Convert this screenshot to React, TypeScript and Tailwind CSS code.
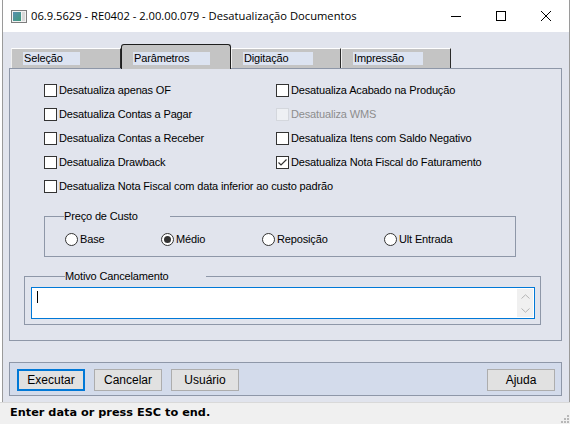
import React from 'react'

const ROWS: { label: string; checked?: boolean; disabled?: boolean }[][] = [
  [{ label: 'Desatualiza apenas OF' }, { label: 'Desatualiza Acabado na Produção' }],
  [{ label: 'Desatualiza Contas a Pagar' }, { label: 'Desatualiza WMS', disabled: true }],
  [{ label: 'Desatualiza Contas a Receber' }, { label: 'Desatualiza Itens com Saldo Negativo' }],
  [{ label: 'Desatualiza Drawback' }, { label: 'Desatualiza Nota Fiscal do Faturamento', checked: true }],
]

const TABS = [
  { label: 'Seleção', hl: 'w-[57px]' },
  { label: 'Parâmetros', hl: 'w-[77px]', active: true },
  { label: 'Digitação', hl: 'w-[70px]' },
  { label: 'Impressão', hl: 'w-[70px]' },
]

const RADIOS = [
  { label: 'Base', w: 'w-[96px]' },
  { label: 'Médio', w: 'w-[101px]', on: true },
  { label: 'Reposição', w: 'w-[122px]' },
  { label: 'Ult Entrada', w: 'w-[100px]' },
]

function Check({ label, checked, disabled }: { label: string; checked?: boolean; disabled?: boolean }) {
  return (
    <div className="flex items-center h-[24px]">
      <span
        className={
          disabled
            ? 'w-[13px] h-[13px] border border-[#d4d7dd] bg-[#eef0f4]'
            : 'w-[13px] h-[13px] border border-[#333333] bg-white flex items-center justify-center'
        }>
        {checked && (
          <svg width="11" height="11" viewBox="0 0 11 11">
            <polyline points="1.5,5.5 4,8 9.5,2.5" fill="none" stroke="#333" strokeWidth="1.2" />
          </svg>
        )}
      </span>
      <span className={disabled ? 'ml-[2px] text-[#8d8d8d]' : 'ml-[2px]'}>{label}</span>
    </div>
  )
}

function Radio({ label, on }: { label: string; on?: boolean }) {
  return (
    <div className="flex items-center">
      <span className="w-[13px] h-[13px] rounded-full border border-[#333333] bg-white flex items-center justify-center">
        {on && <span className="w-[7px] h-[7px] rounded-full bg-[#333333]" />}
      </span>
      <span className="ml-[2px]">{label}</span>
    </div>
  )
}

function Button({ label, primary }: { label: string; primary?: boolean }) {
  return (
    <button
      className={
        primary
          ? 'w-[68px] h-[22px] bg-[#e1e1e1] border-2 border-[#0078d7] text-[12px]'
          : 'w-[68px] h-[22px] bg-[#e1e1e1] border border-[#adadad] text-[12px]'
      }>
      {label}
    </button>
  )
}

export default function App() {
  return (
    <div className="w-[570px] h-[424px] flex flex-col bg-white overflow-hidden text-black font-['Liberation_Sans',Arial,sans-serif] text-[11px] tracking-[-0.15px] pl-[2px]">
      <div className="flex-1 flex flex-col border-l border-r border-[#9a9a9a]">
        {/* title bar */}
        <div className="h-[32px] flex items-center bg-white shrink-0">
          <svg width="16" height="13" viewBox="0 0 16 13" className="ml-[8px]">
            <defs>
              <linearGradient id="ico" x1="0" y1="0" x2="1" y2="1">
                <stop offset="0" stopColor="#5a8fb0" />
                <stop offset="1" stopColor="#3f9a7c" />
              </linearGradient>
            </defs>
            <rect x="0.5" y="0.5" width="15" height="12" fill="#f2f2f2" stroke="#7d7d7d" />
            <rect x="2" y="2" width="8" height="9" fill="url(#ico)" />
            <rect x="11" y="2" width="3" height="9" fill="#d8d8d8" />
          </svg>
          <span className="ml-[4px] text-[11.2px] tracking-normal font-['Open_Sans',sans-serif] leading-none">
            06.9.5629 - RE0402 - 2.00.00.079 - Desatualização Documentos
          </span>
          <div className="ml-auto flex items-center h-full">
            <div className="w-[46px] h-full flex items-center justify-center">
              <span className="w-[10px] h-px bg-black" />
            </div>
            <div className="w-[44px] h-full flex items-center justify-center">
              <span className="w-[10px] h-[10px] border border-black" />
            </div>
            <div className="w-[46px] h-full flex items-center justify-center">
              <svg width="10" height="10" viewBox="0 0 10 10">
                <path d="M0 0L10 10M10 0L0 10" stroke="#000" strokeWidth="1" />
              </svg>
            </div>
          </div>
        </div>

        {/* dialog body */}
        <div className="flex-1 bg-[#e1e4ed] pt-[12px] pl-[6px] pr-[7px]">
          <div className="h-[24px] flex items-end pl-[2px]">
            {TABS.map(t =>
              t.active ? (
                <div
                  key={t.label}
                  className="relative z-10 -mb-px w-[110px] h-[25px] bg-[#c4c4c4] border-t border-l border-r border-[#1e1e1e] rounded-t-[3px] pl-[11px] pt-[7px]">
                  <div className={`${t.hl} h-[13px] bg-[#dce3f1] leading-[13px] pl-px`}>{t.label}</div>
                </div>
              ) : (
                <div
                  key={t.label}
                  className="w-[110px] h-[20px] bg-[#c4c4c4] border-t border-l border-t-white border-l-[#f0f0f0] border-r border-r-[#2a2a2a] pl-[11px] pt-[3px]">
                  <div className={`${t.hl} h-[13px] bg-[#dce3f1] leading-[13px] pl-px`}>{t.label}</div>
                </div>
              ),
            )}
          </div>

          <div className="w-[553px] h-[273px] border border-[#8e97a8] pt-[9px]">
            <div className="grid grid-cols-[232px_1fr] pl-[34px]">
              {ROWS.map((r, i) => (
                <React.Fragment key={i}>
                  <Check {...r[0]} />
                  <Check {...r[1]} />
                </React.Fragment>
              ))}
              <div className="col-span-2">
                <Check label="Desatualiza Nota Fiscal com data inferior ao custo padrão" />
              </div>
            </div>

            <fieldset className="ml-[34px] mt-[11px] w-[472px] border border-[#8e97a8] pb-[7px]">
              <legend className="ml-[19px] w-[106px] leading-[14px] text-[11px]">Preço de Custo</legend>
              <div className="flex items-center h-[20px] mt-[6px] pl-[20px]">
                {RADIOS.map(r => (
                  <div key={r.label} className={r.w}>
                    <Radio label={r.label} on={r.on} />
                  </div>
                ))}
              </div>
            </fieldset>

            <fieldset className="ml-[14px] mt-[12px] w-[517px] border border-[#8e97a8] pb-[5px]">
              <legend className="ml-[40px] w-[141px] leading-[14px] text-[11px]">Motivo Cancelamento</legend>
              <div className="ml-[6px] mt-[4px] w-[504px] h-[32px] border border-[#0078d7] bg-white flex">
                <span className="ml-[5px] mt-[3px] w-px h-[12px] bg-black" />
                <div className="ml-auto mr-[1px] my-[1px] w-[16px] bg-[#f0f0f0] flex flex-col items-center justify-around">
                  <svg width="9" height="5" viewBox="0 0 9 5">
                    <path d="M0.5 4.5L4.5 0.8L8.5 4.5" fill="none" stroke="#b4b4b4" />
                  </svg>
                  <svg width="9" height="5" viewBox="0 0 9 5">
                    <path d="M0.5 0.5L4.5 4.2L8.5 0.5" fill="none" stroke="#b4b4b4" />
                  </svg>
                </div>
              </div>
            </fieldset>
          </div>

          <div className="mt-[21px] w-[553px] h-[34px] bg-[#d3dbeb] border border-[#8e97a8] flex items-start pt-[6px] pl-[7px] pr-[6px] gap-[9px] tracking-normal">
            <Button label="Executar" primary />
            <Button label="Cancelar" />
            <Button label="Usuário" />
            <div className="ml-auto">
              <Button label="Ajuda" />
            </div>
          </div>
        </div>
      </div>

      {/* status bar */}
      <div className="h-[22px] shrink-0 bg-[#f0f0f0] border-t border-[#d9d9d9] flex items-center pl-[10px] relative -ml-[2px]">
        <span className="font-bold text-[11.3px] tracking-normal font-['DejaVu_Sans',sans-serif]">Enter data or press ESC to end.</span>
        <svg width="9" height="9" viewBox="0 0 9 9" className="absolute right-[1px] bottom-[1px]">
          <g fill="#b8b8b8">
            <rect x="7" y="1" width="2" height="2" />
            <rect x="4" y="4" width="2" height="2" />
            <rect x="7" y="4" width="2" height="2" />
            <rect x="1" y="7" width="2" height="2" />
            <rect x="4" y="7" width="2" height="2" />
            <rect x="7" y="7" width="2" height="2" />
          </g>
        </svg>
      </div>
    </div>
  )
}
